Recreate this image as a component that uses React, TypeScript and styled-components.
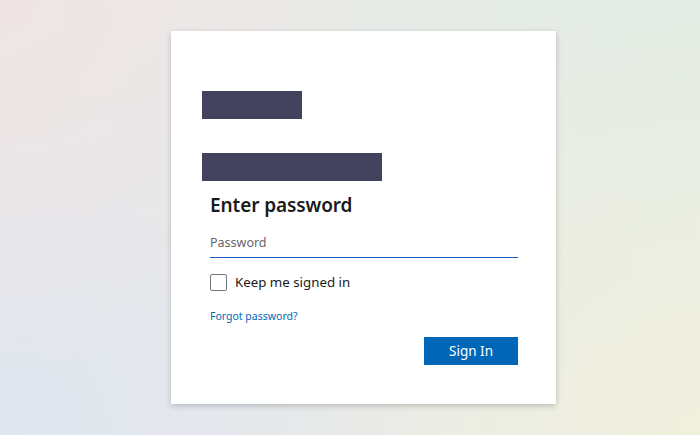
import React from "react";
import styled, { createGlobalStyle } from "styled-components";

const Global = createGlobalStyle`
  html, body { margin: 0; padding: 0; height: 100%; }
  body {
    font-family: "Noto Sans", "Open Sans", sans-serif;
    background:
      radial-gradient(circle at 0% 0%, rgba(240,228,228,0.9), rgba(240,228,228,0) 45%),
      radial-gradient(circle at 0% 100%, rgba(224,230,240,1), rgba(224,230,240,0) 55%),
      radial-gradient(circle at 100% 100%, rgba(240,240,222,1), rgba(240,240,222,0) 55%),
      radial-gradient(circle at 100% 0%, rgba(226,236,228,1), rgba(226,236,228,0) 55%),
      #e9eae8;
  }
  #root { height: 100%; }
`;

const Page = styled.div`
  width: 700px;
  height: 435px;
  box-sizing: border-box;
  padding: 31px 0 0 171px;
`;

const Card = styled.div`
  width: 385px;
  height: 373px;
  box-sizing: border-box;
  background: #fff;
  box-shadow: 0 2px 6px rgba(0, 0, 0, 0.2);
  padding: 60px 38px 0 31px;
  display: flex;
  flex-direction: column;
`;

const Redact = styled.div<{ $w: number; $mt?: number }>`
  width: ${(p) => p.$w}px;
  height: 28px;
  background: #44435f;
  margin-top: ${(p) => p.$mt ?? 0}px;
`;

const Form = styled.div`
  padding-left: 8px;
  display: flex;
  flex-direction: column;
`;

const Title = styled.h1`
  margin: 10px 0 0;
  font-size: 19px;
  font-weight: 600;
  color: #1b1b1b;
  line-height: 28px;
  letter-spacing: -0.1px;
`;

const Field = styled.div`
  margin-top: 15px;
  border-bottom: 1px solid #1a5cc4;
  padding-bottom: 6px;
`;

const Input = styled.input`
  display: block;
  width: 100%;
  border: none;
  outline: none;
  padding: 0;
  font-family: inherit;
  font-size: 12.5px;
  height: 17px;
  color: #1b1b1b;
  background: transparent;
  &::placeholder { color: #666; }
`;

const CheckRow = styled.label`
  margin-top: 15px;
  display: flex;
  align-items: center;
  gap: 8px;
  font-size: 13.3px;
  color: #1b1b1b;
`;

const Box = styled.span`
  width: 15px;
  height: 15px;
  border: 1px solid #777;
  border-radius: 2px;
  display: inline-block;
`;

const Link = styled.a`
  margin-top: 17px;
  font-size: 10.5px;
  line-height: 16px;
  color: #0067b8;
  text-decoration: none;
`;

const Actions = styled.div`
  margin-top: 13px;
  display: flex;
  justify-content: flex-end;
`;

const Button = styled.button`
  width: 94px;
  height: 28px;
  border: none;
  background: #0067b8;
  color: #fff;
  font-family: inherit;
  font-size: 13.5px;
  padding: 0;
`;

export default function App() {
  return (
    <>
      <Global />
      <Page>
        <Card>
          <Redact $w={100} />
          <Redact $w={180} $mt={34} />
          <Form>
            <Title>Enter password</Title>
            <Field>
              <Input type="password" placeholder="Password" />
            </Field>
            <CheckRow>
              <Box />
              Keep me signed in
            </CheckRow>
            <Link href="#">Forgot password?</Link>
            <Actions>
              <Button>Sign In</Button>
            </Actions>
          </Form>
        </Card>
      </Page>
    </>
  );
}
